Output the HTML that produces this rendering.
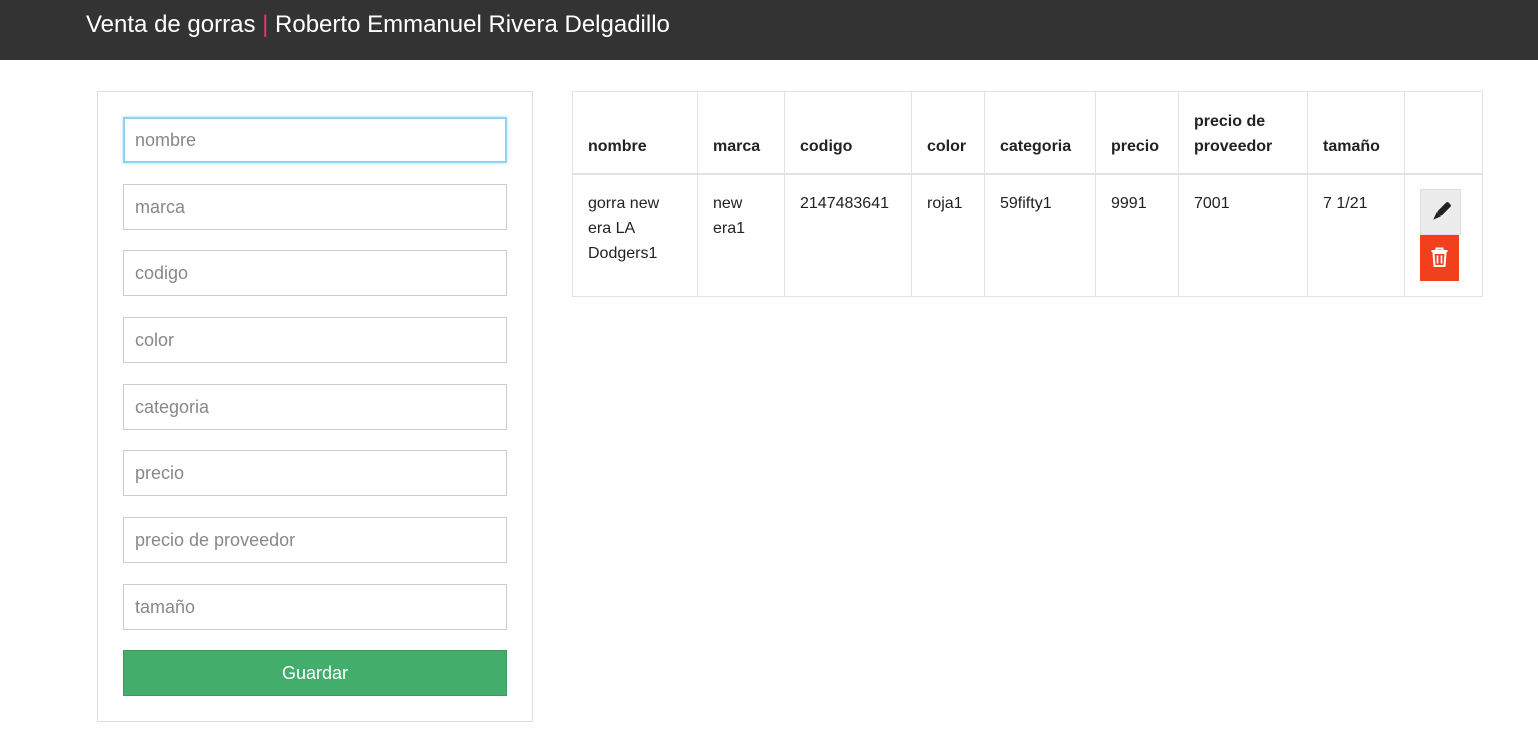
<!DOCTYPE html>
<html><head><meta charset="utf-8"><style>
*{box-sizing:border-box;margin:0;padding:0}
body{width:1538px;height:733px;background:#fff;font-family:"Liberation Sans",sans-serif;color:#222;position:relative;overflow:hidden}
.nav{position:absolute;left:0;top:0;width:1538px;height:60px;background:#333}
.nav .t{position:absolute;left:86px;top:11px;font-size:24px;color:#fff;letter-spacing:0px}
.nav .p{color:#e8336b}
.panel{position:absolute;left:97px;top:91px;width:436px;height:631px;border:1px solid #ddd}
.in{position:absolute;left:123px;width:384px;height:46px;border:1px solid #ccc;font-size:18px;color:#888;padding:12px 11px}
.in.f{border:2px solid #8fd3f0;box-shadow:0 0 3px #9fe0ff;padding:11px 10px}
.btn{position:absolute;left:123px;top:650px;width:384px;height:46px;background:#43ad6b;border:1px solid #3a9a5f;color:#fff;font-size:18px;text-align:center;line-height:44px}
table{position:absolute;left:572px;top:91px;border-collapse:collapse;font-size:16px}
td,th{border:1px solid #e3e3e3;padding:0 15px;vertical-align:top;text-align:left}
th{height:82px;vertical-align:bottom;padding-bottom:14px;font-weight:bold;line-height:25px;border-bottom:2px solid #e3e3e3}
td{height:123px;padding-top:16px;line-height:25px}
.ed{position:absolute;left:1420px;top:189px;width:41px;height:46px;background:#ececec;border:1px solid #ddd}
.dl{position:absolute;left:1420px;top:235px;width:39px;height:46px;background:#f2401f}
</style></head><body>
<div class="nav"><div class="t">Venta de gorras <span class="p">|</span> Roberto Emmanuel Rivera Delgadillo</div></div>
<div class="panel"></div>
<div class="in f" style="top:117px">nombre</div>
<div class="in" style="top:184px">marca</div>
<div class="in" style="top:250px">codigo</div>
<div class="in" style="top:317px">color</div>
<div class="in" style="top:384px">categoria</div>
<div class="in" style="top:450px">precio</div>
<div class="in" style="top:517px">precio de proveedor</div>
<div class="in" style="top:584px">tamaño</div>
<div class="btn">Guardar</div>
<table><tr>
<th style="width:125px">nombre</th><th style="width:87px">marca</th><th style="width:127px">codigo</th><th style="width:73px">color</th><th style="width:111px">categoria</th><th style="width:83px">precio</th><th style="width:129px">precio de<br>proveedor</th><th style="width:97px">tamaño</th><th style="width:78px"></th>
</tr><tr>
<td>gorra new<br>era LA<br>Dodgers1</td><td>new<br>era1</td><td>2147483641</td><td>roja1</td><td>59fifty1</td><td>9991</td><td>7001</td><td>7 1/21</td><td></td>
</tr></table>
<div class="ed"><svg width="41" height="46" viewBox="0 0 41 46"><g transform="rotate(45 20 22)"><rect x="17" y="10" width="6" height="15" rx="2" fill="#222"/><path d="M17 25 L23 25 L20 33 Z" fill="#222"/></g></svg></div>
<div class="dl"><svg width="39" height="46" viewBox="0 0 39 46"><path d="M11.5 16h16M16.5 16v-2.5h6v2.5M13.5 18h12l-1 13h-10z" stroke="#fff" stroke-width="2" fill="none"/><path d="M17.5 20.5v8M21.5 20.5v8" stroke="#fff" stroke-width="1.7"/></svg></div>
</body></html>
